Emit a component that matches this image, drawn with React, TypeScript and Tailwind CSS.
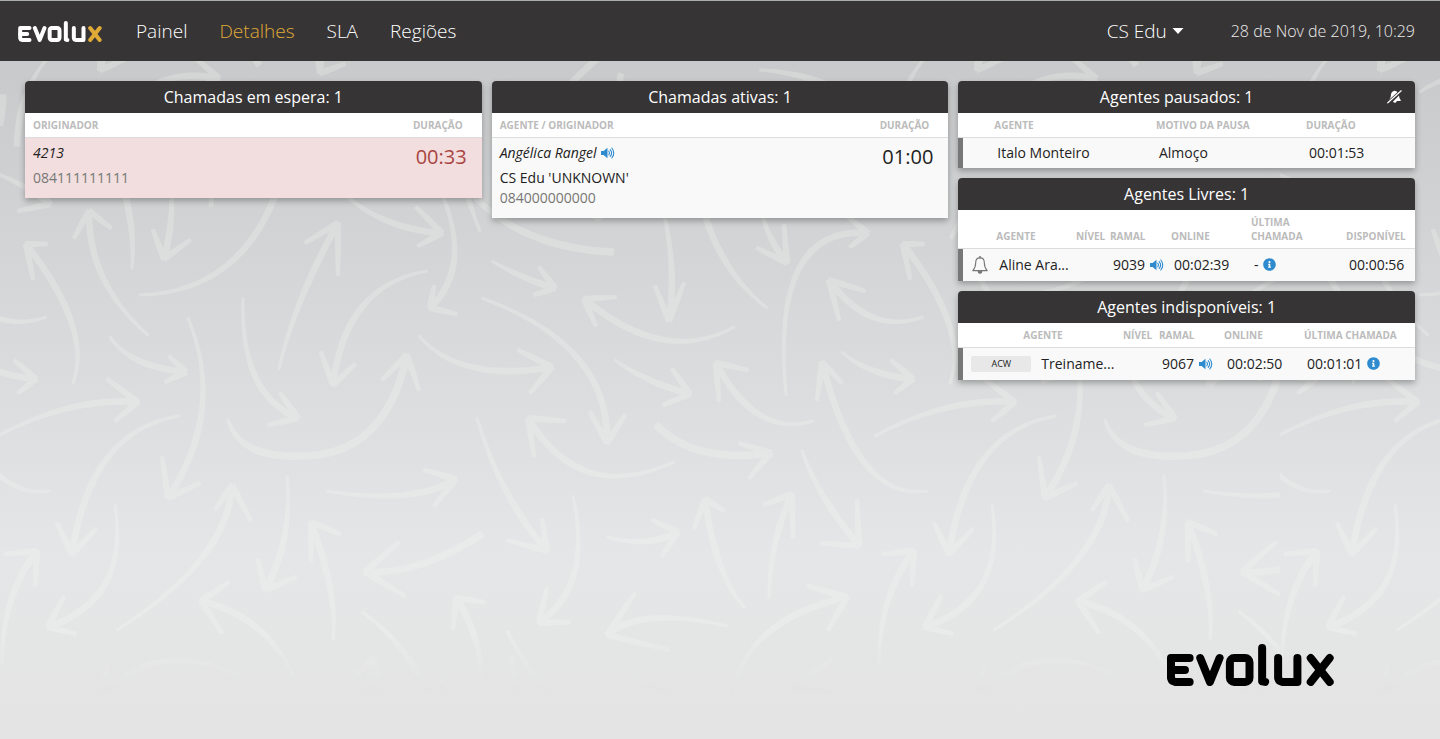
import { useState, type ReactNode } from "react";
import clsx from "clsx";
import { FaInfoCircle } from "react-icons/fa";

type Point = [number, number];

interface Arrow {
  // start, control and end of the shaft
  shaft: [number, number, number, number, number, number];
  barbs?: Point[];
  from?: number;
  to?: number;
}

const PATTERN_WIDTH = 877;
const TILE_WIDTH = 1280;

const arrows: Arrow[] = [
  { shaft: [46, 60, 18, 95, 17, 146] },
  { shaft: [112, 40, 104, 52, 100, 70], barbs: [[126, 59], [101, 52]] },
  { shaft: [140, 92, 170, 70, 219, 78], barbs: [[194, 57], [186, 93]] },
  { shaft: [336, 30, 320, 50, 320, 73], barbs: [[345, 64], [317, 52]] },
  { shaft: [250, 50, 254, 58, 259, 65] },
  { shaft: [596, 60, 560, 90, 545, 120], from: 5, to: 5 },
  { shaft: [622, 98, 618, 85, 621, 74], from: 5, to: 5 },
  { shaft: [760, 70, 800, 72, 840, 90] },
  { shaft: [3, 95, 3, 110, 0, 125], from: 5, to: 5 },
  { shaft: [-2, 174, 25, 185, 50, 204], barbs: [[18, 211], [36, 180]] },
  { shaft: [73, 383, 93, 330, 26, 244], barbs: [[47, 244], [33, 279]] },
  { shaft: [148, 335, 88, 283, 89, 211], barbs: [[111, 228], [74, 238]] },
  { shaft: [188, 318, 226, 410, 168, 498], barbs: [[162, 457], [200, 483]] },
  { shaft: [171, 180, 174, 222, 164, 259], barbs: [[153, 230], [190, 240]] },
  { shaft: [140, 295, 243, 292, 279, 185] },
  { shaft: [132, 268, 135, 232, 124, 190] },
  { shaft: [211, 206, 211, 200, 213, 190], from: 3, to: 3 },
  { shaft: [279, 369, 294, 302, 338, 223], barbs: [[305, 243], [338, 275]] },
  { shaft: [243, 298, 240, 395, 298, 418], barbs: [[280, 393], [268, 425]] },
  { shaft: [228, 420, 240, 458, 300, 456], from: 2, to: 6 },
  { shaft: [298, 456, 385, 458, 407, 355], from: 6, to: 6, barbs: [[382, 380], [419, 390]] },
  { shaft: [427, 271, 345, 285, 333, 385], barbs: [[321, 352], [355, 364]] },
  { shaft: [438, 185, 475, 265, 430, 308], barbs: [[434, 286], [457, 314]] },
  { shaft: [340, 190, 380, 229, 442, 233], barbs: [[416, 207], [418, 246]] },
  { shaft: [466, 190, 473, 215, 480, 231], from: 5, to: 2 },
  { shaft: [470, 192, 520, 248, 613, 252], from: 4, to: 6 },
  { shaft: [419, 336, 460, 383, 552, 367], barbs: [[518, 350], [530, 393]] },
  { shaft: [842, 352, 868, 375, 913, 379], barbs: [[891, 360], [895, 393]] },
  { shaft: [110, 337, 130, 367, 186, 372], barbs: [[169, 356], [165, 382]] },
  { shaft: [-2, 436, 70, 397, 138, 402], barbs: [[107, 379], [115, 421]] },
  { shaft: [179, 416, 90, 430, 72, 554], barbs: [[57, 523], [96, 529]] },
  { shaft: [927, 491, 857, 502, 822, 362], barbs: [[842, 383], [817, 400]] },
  { shaft: [492, 261, 520, 278, 555, 288], barbs: [[539, 267], [534, 295]] },
  { shaft: [482, 298, 610, 345, 607, 443], barbs: [[590, 412], [625, 415]] },
  { shaft: [662, 205, 677, 265, 669, 321], barbs: [[655, 286], [684, 283]] },
  { shaft: [734, 327, 665, 366, 584, 299], barbs: [[616, 297], [596, 326]] },
  { shaft: [767, 308, 720, 272, 702, 205] },
  { shaft: [761, 210, 768, 240, 787, 263], barbs: [[784, 225], [757, 248]] },
  { shaft: [592, 212, 596, 222, 602, 216], from: 4, to: 4 },
  { shaft: [786, 395, 770, 225, 868, 233], barbs: [[848, 217], [850, 247]] },
  { shaft: [923, 317, 870, 336, 829, 280], barbs: [[865, 291], [839, 320]] },
  { shaft: [615, 360, 645, 382, 690, 394], barbs: [[672, 369], [663, 405]] },
  { shaft: [813, 421, 755, 438, 716, 363], barbs: [[748, 370], [719, 401]] },
  { shaft: [656, 425, 695, 464, 771, 453], from: 6, to: 6, barbs: [[739, 443], [749, 478]] },
  { shaft: [674, 462, 580, 505, 528, 418], barbs: [[565, 421], [534, 456]] },
  { shaft: [477, 418, 500, 497, 547, 551], barbs: [[542, 519], [507, 540]] },
  { shaft: [802, 450, 815, 492, 859, 546], barbs: [[857, 500], [821, 543]] },
  { shaft: [115, 505, 130, 600, 48, 627], barbs: [[64, 596], [76, 634]] },
  { shaft: [2, 664, 2, 595, 37, 551], barbs: [[5, 554], [35, 586]] },
  { shaft: [117, 630, 228, 560, 232, 485], barbs: [[215, 510], [251, 521]] },
  { shaft: [287, 476, 293, 540, 265, 590], barbs: [[258, 559], [296, 577]] },
  { shaft: [333, 640, 338, 595, 311, 522], barbs: [[340, 534], [311, 562]] },
  { shaft: [302, 696, 275, 618, 201, 601], barbs: [[229, 582], [222, 633]] },
  { shaft: [243, 678, 160, 635, 102, 696], barbs: [[107, 664]] },
  { shaft: [327, 491, 415, 505, 456, 479], barbs: [[424, 470], [434, 506]] },
  { shaft: [482, 534, 420, 575, 365, 572], from: 6, to: 5, barbs: [[399, 542], [405, 596]] },
  { shaft: [362, 612, 405, 642, 430, 697] },
  { shaft: [368, 700, 370, 680, 374, 658], from: 7, to: 7, barbs: [[342, 688], [384, 700]] },
  { shaft: [482, 697, 484, 640, 456, 598], barbs: [[484, 602], [453, 629]] },
  { shaft: [443, 674, 442, 686, 440, 700] },
  { shaft: [573, 496, 593, 585, 539, 623], barbs: [[547, 588], [570, 622]] },
  { shaft: [607, 537, 648, 548, 678, 532], barbs: [[652, 520], [662, 556]] },
  { shaft: [745, 608, 715, 575, 705, 499], barbs: [[724, 511], [694, 529]] },
  { shaft: [769, 598, 770, 540, 792, 494], barbs: [[763, 505], [793, 538]] },
  { shaft: [727, 626, 640, 606, 607, 635], barbs: [[635, 593], [669, 650]] },
  { shaft: [731, 697, 745, 620, 847, 597], barbs: [[807, 586], [828, 630]] },
  { shaft: [507, 631, 530, 675, 552, 697] },
  { shaft: [511, 656, 515, 680, 520, 700], from: 5, to: 5 },
  { shaft: [623, 680, 650, 682, 680, 699], from: 5, to: 5 },
  { shaft: [870, 700, 830, 692, 792, 688], barbs: [[832, 659]] },
];

// Brush stroke along a quadratic curve whose width grows from w0 to w1
function brush([x0, y0, cx, cy, x1, y1]: Arrow["shaft"], w0: number, w1: number) {
  const left: string[] = [];
  const right: string[] = [];
  for (let i = 0; i <= 16; i++) {
    const t = i / 16;
    const u = 1 - t;
    const x = u * u * x0 + 2 * u * t * cx + t * t * x1;
    const y = u * u * y0 + 2 * u * t * cy + t * t * y1;
    const dx = 2 * u * (cx - x0) + 2 * t * (x1 - cx);
    const dy = 2 * u * (cy - y0) + 2 * t * (y1 - cy);
    const len = Math.hypot(dx, dy) || 1;
    const w = (w0 + (w1 - w0) * Math.min(1, t * 1.6)) / 2;
    left.push(`${(x - (dy / len) * w).toFixed(1)} ${(y + (dx / len) * w).toFixed(1)}`);
    right.unshift(`${(x + (dy / len) * w).toFixed(1)} ${(y - (dx / len) * w).toFixed(1)}`);
  }
  return `M${left.join("L")}L${right.join("L")}Z`;
}

function Backdrop() {
  return (
    <svg className="pointer-events-none absolute left-0 top-0 -z-10 h-[700px] w-full" aria-hidden="true">
      <defs>
        <linearGradient id="fade" x1="0" y1="0" x2="0" y2="1">
          <stop offset="0.9" stopColor="#fff" />
          <stop offset="0.99" stopColor="#000" />
        </linearGradient>
        <mask id="fadeMask" maskUnits="userSpaceOnUse" x="0" y="0" width="3000" height="700">
          <rect width="3000" height="700" fill="url(#fade)" />
        </mask>
        <g id="arrows" fill="#f8fbf6" stroke="#f8fbf6" strokeWidth="1.6" strokeLinejoin="round">
          {arrows.map(({ shaft, barbs = [], from = 1.5, to = 5 }, i) => (
            <g key={i}>
              <path d={brush(shaft, from, to)} />
              {barbs.map(([x, y]) => (
                <path
                  key={`${x}-${y}`}
                  d={brush([x, y, (x + shaft[4]) / 2, (y + shaft[5]) / 2, shaft[4], shaft[5]], 2.8, 4.6)}
                />
              ))}
            </g>
          ))}
        </g>
        <pattern id="tile" patternUnits="userSpaceOnUse" width={TILE_WIDTH} height="700">
          <use href="#arrows" x={-PATTERN_WIDTH} />
          <use href="#arrows" />
          <use href="#arrows" x={PATTERN_WIDTH} />
        </pattern>
      </defs>
      <g mask="url(#fadeMask)">
        <rect width="100%" height="700" fill="url(#tile)" opacity="0.25" />
      </g>
    </svg>
  );
}

function Logo({ className, accent = "currentColor" }: { className?: string; accent?: string }) {
  return (
    <svg viewBox="52 42 502 126" className={className} role="img" aria-label="Evolux">
      <g fill="none" stroke="currentColor" strokeWidth="24" strokeLinecap="round" strokeLinejoin="round">
        <polyline points="120,84 64,84 64,144 67,152 76,156 120,156" />
        <line x1="64" y1="120" x2="106" y2="120" />
        <polyline points="152,84 181,156 210,84" />
        <rect x="241" y="84" width="59" height="72" rx="13" />
        <polyline points="338,54 338,154 347,156" />
        <polyline points="386,84 386,144 389,152 398,156 444,156 444,84" />
        <g stroke={accent}>
          <line x1="484" y1="84" x2="541" y2="156" />
          <line x1="541" y1="84" x2="484" y2="156" />
        </g>
      </g>
    </svg>
  );
}

function VolumeIcon() {
  return (
    <svg viewBox="0 0 14 12" className="h-3 w-3.5 shrink-0 text-[#2e8bcf]" fill="none" stroke="currentColor" aria-hidden="true">
      <path d="M0 4h2.6L6.5 0.8v10.4L2.6 8H0z" fill="currentColor" stroke="none" />
      <path d="M7.8 4.2c.9 1.1.9 2.5 0 3.6M9.2 2.6c1.7 2 1.7 4.8 0 6.8M10.8 1c2.6 2.9 2.6 7.1 0 10" strokeWidth="1.1" strokeLinecap="round" />
    </svg>
  );
}

function BellIcon() {
  return (
    <svg viewBox="0 0 16 18" className="h-[18px] w-4 text-[#777]" fill="none" stroke="currentColor" strokeWidth="1.1" aria-hidden="true">
      <path d="M8 1.9c-2.9 0-4.3 2-4.3 4.6 0 4.2-.9 6-2.9 8.1h14.4c-2-2.1-2.9-3.9-2.9-8.1 0-2.6-1.4-4.6-4.3-4.6z" strokeLinejoin="round" />
      <path d="M8 0.4v1.4" strokeLinecap="round" strokeWidth="1.5" />
      <path d="M6.2 15.2c0 2.6 3.6 2.6 3.6 0z" fill="currentColor" />
    </svg>
  );
}

function BellOffIcon() {
  return (
    <svg viewBox="0 0 15 14" className="h-3.5 w-[15px]" fill="currentColor" aria-hidden="true">
      <path d="M10.4 2.2C9.800 1.500 9 1.200 8.200 1.100 8 .5 7.200.5 7 1.100 4.900 1.500 4 3.300 3.900 5.200 3.800 7.200 3.200 8.500 1.900 9.900z" />
      <path d="M12 5.600c.2 2 .7 3.200 1.700 4.500.3.400.1.900-.3.900H9.700c0 1-.8 1.800-1.900 1.800-.9 0-1.600-.5-1.800-1.200z" />
      <path d="M14.200.8.800 12.800" stroke="currentColor" strokeWidth="1.200" strokeLinecap="round" />
    </svg>
  );
}

function Card({ title, action, children }: { title: string; action?: ReactNode; children: ReactNode }) {
  return (
    <section className="rounded-t bg-white shadow-[0_3px_6px_rgba(0,0,0,0.3)]">
      <header className="flex h-8 items-center gap-[5px] rounded-t bg-[#363435] px-[13px] text-white">
        <h2 className="flex-1 text-center text-base leading-8">{title}</h2>
        {action}
      </header>
      {children}
    </section>
  );
}

function Th({ children, className, colSpan }: { children?: ReactNode; className?: string; colSpan?: number }) {
  return (
    <th
      colSpan={colSpan}
      className={clsx("pb-[5px] pt-[5px] align-bottom text-[10px] font-bold uppercase leading-[14px] text-[#bbb]", className)}
    >
      {children}
    </th>
  );
}

const theadRow = "border-b border-[#ddd] text-left";
const agentRow = "bg-[#f9f9f9] shadow-[inset_5px_0_0_#777]";

const links = ["Painel", "Detalhes", "SLA", "Regiões"];

function Navbar() {
  const [active, setActive] = useState("Detalhes");

  return (
    <header className="flex h-[61px] items-center border-t border-[#a9adab] bg-[#363435] pl-[18px] pr-[25px] text-white">
      <Logo className="h-[21px] w-[84px]" accent="#e0aa36" />
      <nav className="ml-[34px] flex gap-8 text-[19px] font-light">
        {links.map((link) => (
          <a
            key={link}
            href="#"
            onClick={() => setActive(link)}
            className={clsx(link === active ? "text-[#e0aa36]" : "text-white")}
          >
            {link}
          </a>
        ))}
      </nav>
      <button type="button" className="ml-auto flex items-center gap-[5px] text-[19px] font-light">
        CS Edu
        <svg viewBox="0 0 12 6" className="h-1.5 w-3" fill="currentColor" aria-hidden="true">
          <path d="M0.500 0h11L6 6z" />
        </svg>
      </button>
      <time className="ml-[47px] text-base font-light text-[#eee]">28 de Nov de 2019, 10:29</time>
    </header>
  );
}

export default function App() {
  return (
    <div
      className="relative isolate flex min-h-screen flex-col bg-linear-to-b from-[#c5c6c7] from-0% via-[#e5e6e7] via-75% to-[#e4e4e4] to-100% text-sm leading-5 text-[#222]"
      style={{ fontFamily: '"Open Sans", "Noto Sans", sans-serif' }}
    >
      <Backdrop />
      <Navbar />

      <main className="grid grid-cols-3 items-start gap-2.5 px-[25px] pt-5">
        <Card title="Chamadas em espera: 1">
          <table className="w-full table-fixed border-collapse">
            <thead>
              <tr className={theadRow}>
                <Th className="pl-2">Originador</Th>
                <Th className="w-24 pr-[19px] text-right">Duração</Th>
              </tr>
            </thead>
            <tbody>
              <tr className="bg-[#f2dede]">
                <td className="pb-2.5 pl-2 pt-[5px]">
                  <p className="italic">4213</p>
                  <p className="mt-[5px] text-[#777]">084111111111</p>
                </td>
                <td className="pr-[15px] pt-[5px] text-right align-top text-xl text-[#a94442]">00:33</td>
              </tr>
            </tbody>
          </table>
        </Card>

        <Card title="Chamadas ativas: 1">
          <table className="w-full table-fixed border-collapse">
            <thead>
              <tr className={theadRow}>
                <Th className="pl-2">Agente / Originador</Th>
                <Th className="w-24 pr-[19px] text-right">Duração</Th>
              </tr>
            </thead>
            <tbody>
              <tr className="bg-[#f9f9f9]">
                <td className="pb-2.5 pl-2 pt-[5px]">
                  <p className="flex items-center gap-1 italic">
                    Angélica Rangel <VolumeIcon />
                  </p>
                  <p className="mt-[5px]">CS Edu 'UNKNOWN'</p>
                  <p className="text-[#777]">084000000000</p>
                </td>
                <td className="pr-[15px] pt-[5px] text-right align-top text-xl">01:00</td>
              </tr>
            </tbody>
          </table>
        </Card>

        <div className="flex flex-col gap-2.5">
          <Card
            title="Agentes pausados: 1"
            action={
              <button type="button" aria-label="Silenciar alertas">
                <BellOffIcon />
              </button>
            }
          >
            <table className="w-full table-fixed border-collapse">
              <thead>
                <tr className={theadRow}>
                  <Th className="w-9" />
                  <Th>Agente</Th>
                  <Th className="w-[150px]">Motivo da pausa</Th>
                  <Th className="w-[109px]">Duração</Th>
                </tr>
              </thead>
              <tbody>
                <tr className={clsx("h-[30px]", agentRow)}>
                  <td />
                  <td className="pl-[3px]">Italo Monteiro</td>
                  <td className="pl-[3px]">Almoço</td>
                  <td className="pl-[3px]">00:01:53</td>
                </tr>
              </tbody>
            </table>
          </Card>

          <Card title="Agentes Livres: 1">
            <table className="w-full table-fixed border-collapse">
              <thead>
                <tr className={theadRow}>
                  <Th className="w-[38px]" />
                  <Th>Agente</Th>
                  <Th className="w-[34px]">Nível</Th>
                  <Th className="w-[61px]">Ramal</Th>
                  <Th className="w-20">Online</Th>
                  <Th className="w-[95px]">
                    Última
                    <br />
                    chamada
                  </Th>
                  <Th className="w-[69px]">Disponível</Th>
                </tr>
              </thead>
              <tbody>
                <tr className={clsx("h-[33px]", agentRow)}>
                  <td className="pl-3.5">
                    <BellIcon />
                  </td>
                  <td className="pl-[3px]">Aline Ara...</td>
                  <td />
                  <td className="pl-[3px]">
                    <span className="flex items-center gap-[5px]">
                      9039 <VolumeIcon />
                    </span>
                  </td>
                  <td className="pl-[3px]">00:02:39</td>
                  <td className="pl-[3px]">
                    <span className="flex items-center gap-1">
                      - <FaInfoCircle className="text-[#2e8bcf]" size={13} />
                    </span>
                  </td>
                  <td className="pl-[3px]">00:00:56</td>
                </tr>
              </tbody>
            </table>
          </Card>

          <Card title="Agentes indisponíveis: 1">
            <table className="w-full table-fixed border-collapse">
              <colgroup>
                <col className="w-20" />
                <col />
                <col className="w-9" />
                <col className="w-[65px]" />
                <col className="w-20" />
                <col className="w-[111px]" />
              </colgroup>
              <thead>
                <tr className={theadRow}>
                  <Th colSpan={2} className="pl-[65px]">
                    Agente
                  </Th>
                  <Th>Nível</Th>
                  <Th>Ramal</Th>
                  <Th>Online</Th>
                  <Th>Última chamada</Th>
                </tr>
              </thead>
              <tbody>
                <tr className={clsx("h-8", agentRow)}>
                  <td className="pl-[13px]">
                    <span className="block w-[60px] rounded-xs bg-[#e8e8e8] text-center text-[9px] leading-4">ACW</span>
                  </td>
                  <td className="pl-[3px]">Treiname...</td>
                  <td />
                  <td className="pl-[3px]">
                    <span className="flex items-center gap-[5px]">
                      9067 <VolumeIcon />
                    </span>
                  </td>
                  <td className="pl-[3px]">00:02:50</td>
                  <td className="pl-[3px]">
                    <span className="flex items-center gap-[5px]">
                      00:01:01 <FaInfoCircle className="text-[#2e8bcf]" size={13} />
                    </span>
                  </td>
                </tr>
              </tbody>
            </table>
          </Card>
        </div>
      </main>

      <footer className="mt-auto flex justify-end pb-[53px] pr-[106px] text-black">
        <Logo className="h-[42px] w-[167px]" />
      </footer>
    </div>
  );
}
